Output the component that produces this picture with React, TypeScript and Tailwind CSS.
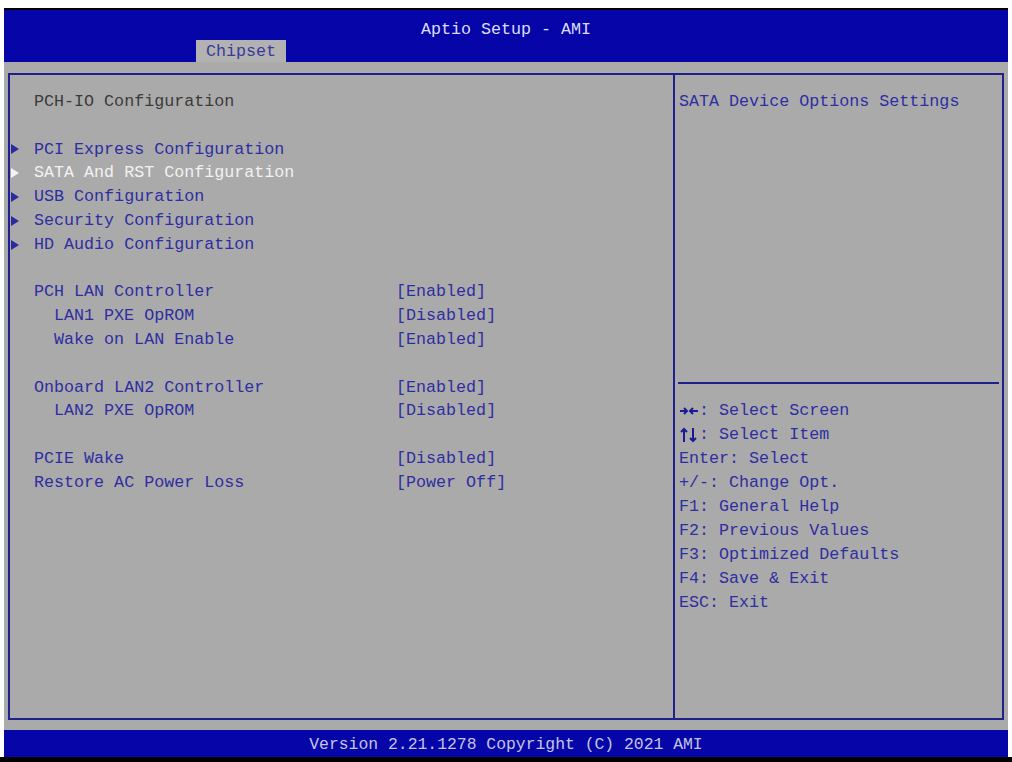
import React from 'react';

const mono = { fontFamily: '"Liberation Mono", "DejaVu Sans Mono", monospace' };

type Row =
  | { kind: 'blank' }
  | { kind: 'title'; label: string }
  | { kind: 'link'; label: string; selected?: boolean }
  | { kind: 'opt'; label: string; value: string; indent?: boolean };

const rows: Row[] = [
  { kind: 'title', label: 'PCH-IO Configuration' },
  { kind: 'blank' },
  { kind: 'link', label: 'PCI Express Configuration' },
  { kind: 'link', label: 'SATA And RST Configuration', selected: true },
  { kind: 'link', label: 'USB Configuration' },
  { kind: 'link', label: 'Security Configuration' },
  { kind: 'link', label: 'HD Audio Configuration' },
  { kind: 'blank' },
  { kind: 'opt', label: 'PCH LAN Controller', value: '[Enabled]' },
  { kind: 'opt', label: 'LAN1 PXE OpROM', value: '[Disabled]', indent: true },
  { kind: 'opt', label: 'Wake on LAN Enable', value: '[Enabled]', indent: true },
  { kind: 'blank' },
  { kind: 'opt', label: 'Onboard LAN2 Controller', value: '[Enabled]' },
  { kind: 'opt', label: 'LAN2 PXE OpROM', value: '[Disabled]', indent: true },
  { kind: 'blank' },
  { kind: 'opt', label: 'PCIE Wake', value: '[Disabled]' },
  { kind: 'opt', label: 'Restore AC Power Loss', value: '[Power Off]' },
];

const keys: [string, string][] = [
  ['→←', ': Select Screen'],
  ['↑↓', ': Select Item'],
  ['', 'Enter: Select'],
  ['', '+/-: Change Opt.'],
  ['', 'F1: General Help'],
  ['', 'F2: Previous Values'],
  ['', 'F3: Optimized Defaults'],
  ['', 'F4: Save & Exit'],
  ['', 'ESC: Exit'],
];

function Arrow({ white }: { white?: boolean }) {
  return (
    <svg width="8" height="10" viewBox="0 0 8 10" className="shrink-0">
      <path d="M0 0 L8 5 L0 10 Z" fill={white ? '#f4f4f4' : '#2a2aa0'} />
    </svg>
  );
}

// draws the two arrow keys of the help lines, the font's arrows are too small
function KeyArrows({ kind }: { kind: string }) {
  const c = '#1a1a96';
  if (kind === '→←')
    return (
      <svg width="20" height="24" viewBox="0 0 20 24" className="shrink-0">
        <path d="M1 12 H8 M5 9 L8 12 L5 15" stroke={c} strokeWidth="2" fill="none" />
        <path d="M19 12 H11 M14 9 L11 12 L14 15" stroke={c} strokeWidth="2" fill="none" />
      </svg>
    );
  return (
    <svg width="20" height="24" viewBox="0 0 20 24" className="shrink-0">
      <path d="M5 19 V6 M2 9 L5 6 L8 9" stroke={c} strokeWidth="2" fill="none" />
      <path d="M14 5 V18 M11 15 L14 18 L17 15" stroke={c} strokeWidth="2" fill="none" />
    </svg>
  );
}

export default function App() {
  return (
    <div className="w-[1012px] h-[762px] bg-white pt-[8px] px-[4px] flex flex-col text-[16.7px] leading-[24px]" style={mono}>
      {/* header */}
      <div className="h-[54px] border-t-2 border-black bg-[#0606a8] flex flex-col items-center relative">
        <div className="mt-[8px] text-[#dcdcff]">Aptio Setup - AMI</div>
        <div className="absolute left-[192px] bottom-0 w-[90px] h-[22px] pt-[2px] bg-[#b2b2b2] text-[#3a3a9a] flex items-center justify-center">
          Chipset
        </div>
      </div>

      {/* body */}
      <div className="h-[668px] bg-[#aaaaaa] px-[4px] pt-[11px] pb-[10px] flex">
        <div className="flex-1 flex border-2 border-[#20208c]">
          {/* left panel */}
          <div className="w-[663px] pt-[15px] flex flex-col leading-[23.8px]">
            {rows.map((r, i) => {
              if (r.kind === 'blank') return <div key={i} className="h-[23.8px]" />;
              if (r.kind === 'title')
                return (
                  <div key={i} className="h-[23.8px] pl-[24px] text-[#3a3a3a]">
                    {r.label}
                  </div>
                );
              if (r.kind === 'link')
                return (
                  <div key={i} className="h-[23.8px] flex items-center">
                    <div className="w-[24px] pl-[1px] flex items-center">
                      <Arrow white={r.selected} />
                    </div>
                    <span className={r.selected ? 'text-[#f2f2f2]' : 'text-[#2e2ea2]'}>{r.label}</span>
                  </div>
                );
              return (
                <div key={i} className="h-[23.8px] flex text-[#2e2ea2]">
                  <div className={`w-[386px] ${r.indent ? 'pl-[44px]' : 'pl-[24px]'}`}>{r.label}</div>
                  <div>{r.value}</div>
                </div>
              );
            })}
          </div>

          {/* right panel */}
          <div className="flex-1 border-l-2 border-[#20208c] flex flex-col">
            <div className="h-[309px] mx-[3px] pt-[15px] pl-[1px] border-b-2 border-[#20208c] text-[#2e2ea2]">
              SATA Device Options Settings
            </div>
            <div className="pt-[15px] pl-[4px] flex flex-col text-[#2e2ea2]">
              {keys.map(([k, t]) => (
                <div key={t} className="h-[24px] flex">
                  {k && <KeyArrows kind={k} />}
                  <span>{t}</span>
                </div>
              ))}
            </div>
          </div>
        </div>
      </div>

      {/* footer */}
      <div className="h-[27px] pt-[2px] bg-[#0606a8] flex items-center justify-center text-[#c4c4e4] text-[16.4px]">
        Version 2.21.1278 Copyright (C) 2021 AMI
      </div>
      <div className="flex-1 bg-black -mx-[4px]" />
    </div>
  );
}
